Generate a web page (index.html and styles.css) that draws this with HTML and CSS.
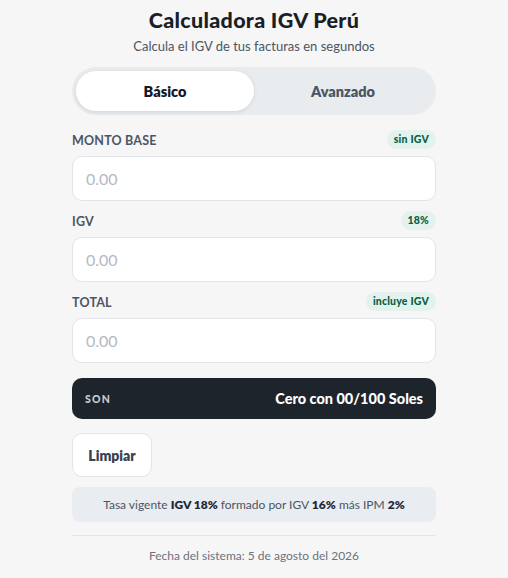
FILE: index.html
```html
<!DOCTYPE html>
<html lang="es">
<head>
<meta charset="utf-8">
<title>Calculadora IGV Perú</title>
<link rel="stylesheet" href="styles.css">
</head>
<body>
<main class="app">
  <header class="head">
    <h1 class="title">Calculadora IGV Perú</h1>
    <p class="subtitle">Calcula el IGV de tus facturas en segundos</p>
  </header>

  <div class="tabs">
    <button class="tab tab-active">Básico</button>
    <button class="tab">Avanzado</button>
  </div>

  <section class="field">
    <div class="field-head">
      <label class="label">MONTO BASE</label>
      <span class="badge">sin IGV</span>
    </div>
    <input class="input" type="text" placeholder="0.00">
  </section>

  <section class="field">
    <div class="field-head">
      <label class="label">IGV</label>
      <span class="badge">18%</span>
    </div>
    <input class="input" type="text" placeholder="0.00">
  </section>

  <section class="field">
    <div class="field-head">
      <label class="label">TOTAL</label>
      <span class="badge">incluye IGV</span>
    </div>
    <input class="input" type="text" placeholder="0.00">
  </section>

  <div class="son">
    <span class="son-label">SON</span>
    <span class="son-value">Cero con 00/100 Soles</span>
  </div>

  <div class="actions">
    <button class="btn">Limpiar</button>
  </div>

  <div class="info">Tasa vigente <b>IGV 18%</b> formado por IGV <b>16%</b> más IPM <b>2%</b></div>

  <footer class="foot">Fecha del sistema: 5 de agosto del 2026</footer>
</main>
</body>
</html>
```

FILE: styles.css
```css
* { box-sizing: border-box; }
html, body { margin: 0; padding: 0; }
body {
  background: #f6f6f7;
  font-family: Lato, "Segoe UI", "Noto Sans", sans-serif;
  color: #1f2937;
}
.app {
  width: 364px;
  margin: 0 auto;
  padding-top: 8px;
  display: flex;
  flex-direction: column;
}
.head { text-align: center; }
.title {
  margin: 0;
  font-size: 21.5px;
  font-weight: 900;
  line-height: 24px;
  letter-spacing: 0.3px;
  color: #1a1f26;
}
.subtitle {
  margin: 6px 0 0;
  font-size: 13px;
  line-height: 16px;
  color: #4b5563;
}
.tabs {
  margin-top: 13px;
  height: 48px;
  padding: 4px;
  border-radius: 24px;
  background: #e9ecef;
  display: grid;
  grid-template-columns: 1fr 1fr;
}
.tab {
  border: 0;
  background: transparent;
  font-family: inherit;
  font-size: 14.5px;
  font-weight: 800;
  color: #4b5563;
  border-radius: 20px;
  cursor: pointer;
}
.tab-active {
  background: #fff;
  color: #111827;
  box-shadow: 0 1px 4px rgba(0,0,0,0.10);
}
.field { margin-top: 15px; }
.field + .field { margin-top: 10px; }
.field-head {
  height: 19px;
  display: flex;
  align-items: center;
  justify-content: space-between;
}
.label {
  font-size: 12.5px;
  font-weight: 700;
  color: #4b5563;
  letter-spacing: 0.2px;
  padding-top: 2px;
}
.badge {
  height: 19px;
  line-height: 19px;
  padding: 0 7px;
  border-radius: 10px;
  background: #e3f2ec;
  color: #065f46;
  font-size: 10.5px;
  font-weight: 900;
  letter-spacing: 0.2px;
}
.input {
  display: block;
  width: 100%;
  height: 45px;
  margin-top: 7px;
  border: 1px solid #e1e4e8;
  border-radius: 10px;
  background: #fff;
  padding: 0 13px;
  font-family: inherit;
  font-size: 16px;
  color: #1f2937;
  outline: none;
}
.input::placeholder { color: #b4bac3; }
.son {
  margin-top: 15px;
  height: 41px;
  border-radius: 10px;
  background: #1e242c;
  padding: 0 13px;
  display: flex;
  align-items: center;
  justify-content: space-between;
}
.son-label {
  font-size: 10.5px;
  font-weight: 900;
  letter-spacing: 1.2px;
  color: #c5ccd6;
}
.son-value {
  font-size: 14.5px;
  font-weight: 900;
  color: #fff;
}
.actions {
  margin-top: 14px;
  display: flex;
}
.btn {
  height: 44px;
  width: 80px;
  padding: 0;
  border: 1px solid #e1e4e8;
  border-radius: 10px;
  background: #fff;
  font-family: inherit;
  font-size: 14px;
  font-weight: 800;
  color: #374151;
}
.info {
  margin-top: 10px;
  height: 35px;
  border-radius: 8px;
  background: #e9ecf0;
  display: flex;
  align-items: center;
  justify-content: center;
  font-size: 12px;
  color: #4b5563;
  white-space: pre;
}
.info b { color: #1f2937; font-weight: 800; }
.foot {
  margin-top: 13px;
  border-top: 1px solid #e3e5e8;
  padding-top: 12px;
  text-align: center;
  font-size: 12px;
  color: #6b7280;
}
```
